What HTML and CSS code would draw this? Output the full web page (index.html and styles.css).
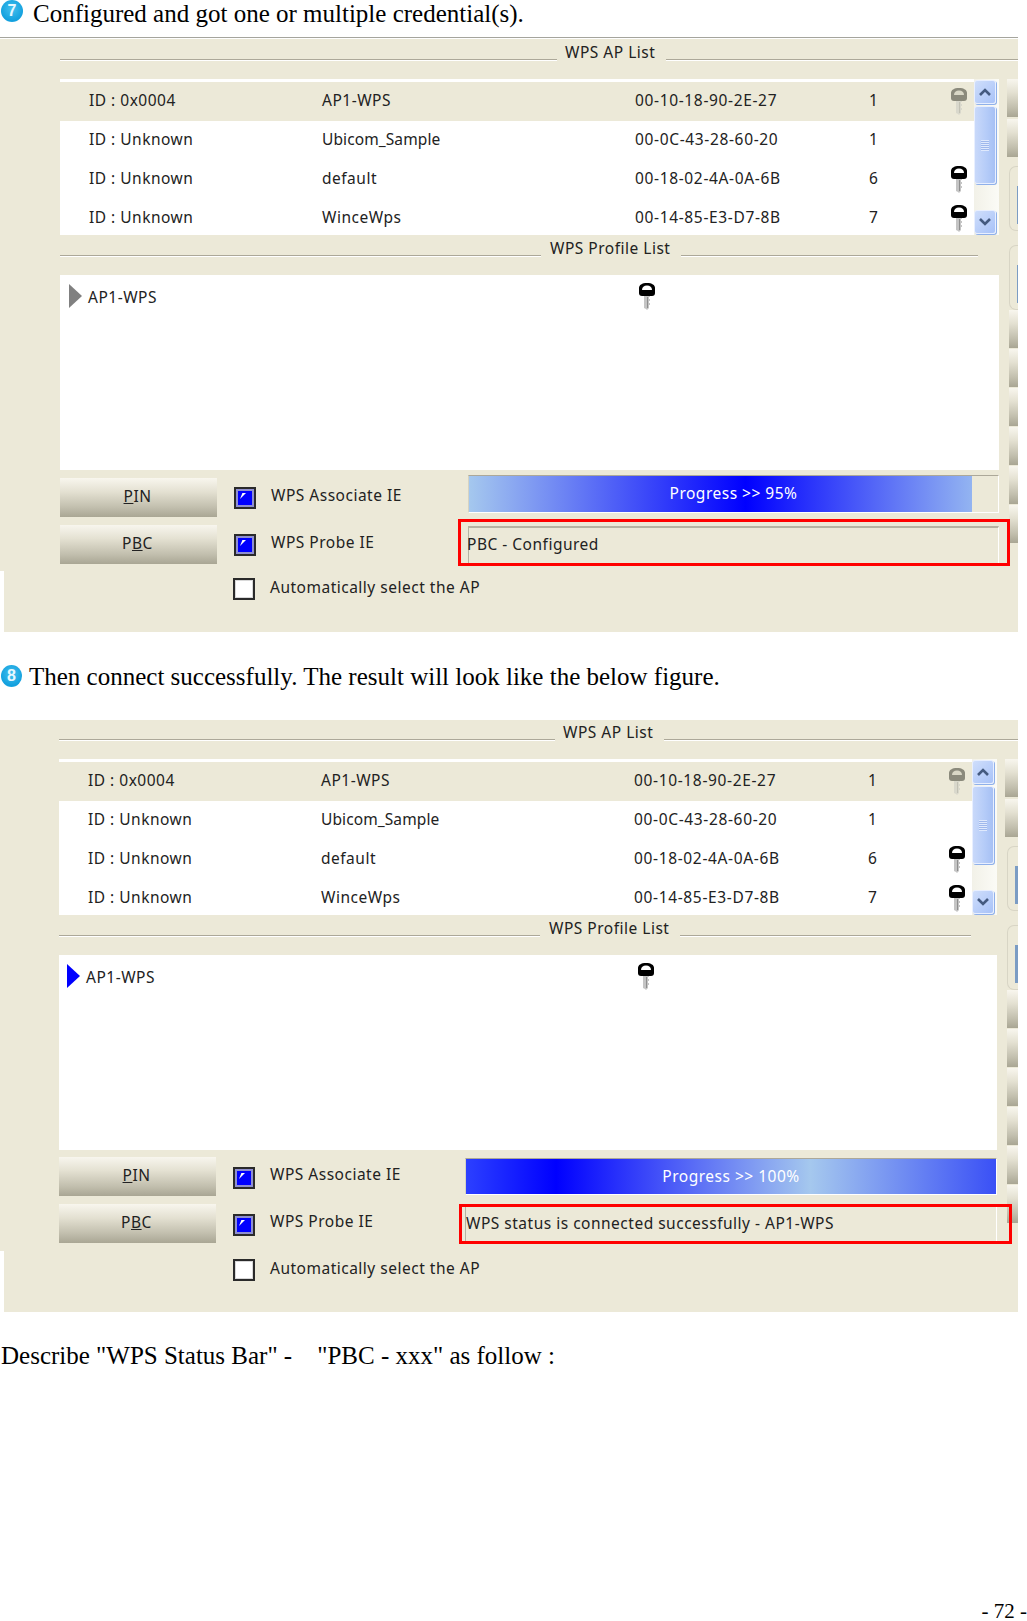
FILE: index.html
```html
<!DOCTYPE html>
<html lang="en">
<head>
<meta charset="utf-8">
<title>WPS status</title>
<link rel="stylesheet" href="styles.css">
</head>
<body>
<svg class="defs" width="0" height="0" aria-hidden="true">
  <symbol id="key" viewBox="0 0 16 29">
    <path class="key-shaft" d="M5 13h6v2h-1v2h1v2h-1v2h1v2h-1v3l-2 2-1-1-2-1z"/>
    <path class="key-line" d="M8 15h1v11H8z"/>
    <path class="key-head" d="M0 11V6C0 3 3 1 8 1s8 2 8 5v5c0 2-1 3-3 3H3c-2 0-3-1-3-3z"/>
    <path class="key-slot" d="M3 8C3 5 5 3.500 8 3.500S13 5 13 8z"/>
  </symbol>
</svg>

<p class="step step-seven"><span class="badge">7</span><span>Configured and got one or multiple credential(s).</span></p>
<div class="rule"></div>

<section class="shot shot-a">
  <div class="title-row">
    <span class="line line-left"></span><span class="title">WPS AP List</span><span class="line line-fill"></span>
  </div>
  <div class="body">
    <div class="work">
      <div class="list">
        <div class="rows">
          <div class="row row-selected"><span>ID : 0x0004</span><span>AP1-WPS</span><span class="mac">00-10-18-90-2E-27</span><span>1</span><svg class="key key-off"><use href="#key"/></svg></div>
          <div class="row"><span>ID : Unknown</span><span class="tight">Ubicom_Sample</span><span class="mac">00-0C-43-28-60-20</span><span>1</span></div>
          <div class="row"><span>ID : Unknown</span><span>default</span><span class="mac">00-18-02-4A-0A-6B</span><span>6</span><svg class="key"><use href="#key"/></svg></div>
          <div class="row"><span>ID : Unknown</span><span>WinceWps</span><span class="mac">00-14-85-E3-D7-8B</span><span>7</span><svg class="key"><use href="#key"/></svg></div>
        </div>
        <div class="scrollbar">
          <div class="sb-btn"><svg viewBox="0 0 12 8" class="chev"><path d="M1 7l5-5 5 5"/></svg></div>
          <div class="sb-thumb"><span class="grip"></span></div>
          <div class="sb-track"></div>
          <div class="sb-btn"><svg viewBox="0 0 12 8" class="chev"><path d="M1 1l5 5 5-5"/></svg></div>
        </div>
      </div>
      <div class="title-row title-row-sub">
        <span class="line line-left"></span><span class="title">WPS Profile List</span><span class="line line-fill"></span>
      </div>
      <div class="profile">
        <span class="arrow arrow-idle"></span><span class="profile-name">AP1-WPS</span>
        <svg class="key key-profile"><use href="#key"/></svg>
      </div>
      <div class="controls">
        <div class="buttons">
          <button class="btn" type="button"><u>P</u>IN</button>
          <button class="btn" type="button">P<u>B</u>C</button>
        </div>
        <div class="checks">
          <div class="check-row"><span class="check check-on"></span><span>WPS Associate IE</span></div>
          <div class="check-row"><span class="check check-on"></span><span>WPS Probe IE</span></div>
          <div class="check-row check-row-auto"><span class="check"></span><span>Automatically select the AP</span></div>
        </div>
        <div class="status-col">
          <div class="progress"><div class="progress-fill"></div><span class="progress-text">Progress &gt;&gt; 95%</span></div>
          <div class="status"><span class="status-text">PBC - Configured</span><span class="highlight"></span></div>
        </div>
      </div>
    </div>
    <div class="strip">
      <i class="strip-btn"></i><i class="strip-btn"></i>
      <div class="strip-box strip-box-first"><i></i></div>
      <div class="strip-box"><i></i></div>
      <i class="strip-btn strip-btn-sm"></i><i class="strip-btn strip-btn-sm"></i><i class="strip-btn strip-btn-sm"></i><i class="strip-btn strip-btn-sm"></i><i class="strip-btn strip-btn-sm"></i><i class="strip-btn strip-btn-sm"></i>
    </div>
  </div>
</section>

<p class="step step-eight"><span class="badge badge-ring">8</span><span>Then connect successfully. The result will look like the below figure.</span></p>

<section class="shot shot-b">
  <div class="title-row">
    <span class="line line-left"></span><span class="title">WPS AP List</span><span class="line line-fill"></span>
  </div>
  <div class="body">
    <div class="work">
      <div class="list">
        <div class="rows">
          <div class="row row-selected"><span>ID : 0x0004</span><span>AP1-WPS</span><span class="mac">00-10-18-90-2E-27</span><span>1</span><svg class="key key-off"><use href="#key"/></svg></div>
          <div class="row"><span>ID : Unknown</span><span class="tight">Ubicom_Sample</span><span class="mac">00-0C-43-28-60-20</span><span>1</span></div>
          <div class="row"><span>ID : Unknown</span><span>default</span><span class="mac">00-18-02-4A-0A-6B</span><span>6</span><svg class="key"><use href="#key"/></svg></div>
          <div class="row"><span>ID : Unknown</span><span>WinceWps</span><span class="mac">00-14-85-E3-D7-8B</span><span>7</span><svg class="key"><use href="#key"/></svg></div>
        </div>
        <div class="scrollbar">
          <div class="sb-btn"><svg viewBox="0 0 12 8" class="chev"><path d="M1 7l5-5 5 5"/></svg></div>
          <div class="sb-thumb"><span class="grip"></span></div>
          <div class="sb-track"></div>
          <div class="sb-btn"><svg viewBox="0 0 12 8" class="chev"><path d="M1 1l5 5 5-5"/></svg></div>
        </div>
      </div>
      <div class="title-row title-row-sub">
        <span class="line line-left"></span><span class="title">WPS Profile List</span><span class="line line-fill"></span>
      </div>
      <div class="profile">
        <span class="arrow"></span><span class="profile-name">AP1-WPS</span>
        <svg class="key key-profile"><use href="#key"/></svg>
      </div>
      <div class="controls">
        <div class="buttons">
          <button class="btn" type="button"><u>P</u>IN</button>
          <button class="btn" type="button">P<u>B</u>C</button>
        </div>
        <div class="checks">
          <div class="check-row"><span class="check check-on"></span><span>WPS Associate IE</span></div>
          <div class="check-row"><span class="check check-on"></span><span>WPS Probe IE</span></div>
          <div class="check-row check-row-auto"><span class="check"></span><span>Automatically select the AP</span></div>
        </div>
        <div class="status-col">
          <div class="progress"><div class="progress-fill"></div><span class="progress-text">Progress &gt;&gt; 100%</span></div>
          <div class="status"><span class="status-text">WPS status is connected successfully - AP1-WPS</span><span class="highlight"></span></div>
        </div>
      </div>
    </div>
    <div class="strip">
      <i class="strip-btn"></i><i class="strip-btn"></i>
      <div class="strip-box strip-box-first"><i></i></div>
      <div class="strip-box"><i></i></div>
      <i class="strip-btn strip-btn-sm"></i><i class="strip-btn strip-btn-sm"></i><i class="strip-btn strip-btn-sm"></i><i class="strip-btn strip-btn-sm"></i><i class="strip-btn strip-btn-sm"></i><i class="strip-btn strip-btn-sm"></i>
    </div>
  </div>
</section>

<p class="step step-plain">Describe "WPS Status Bar" -    "PBC - xxx" as follow :</p>
<p class="page-no">- 72 -</p>
</body>
</html>
```

FILE: styles.css
```css
* { box-sizing: border-box; }
html, body { margin: 0; padding: 0; }
body {
  width: 1027px;
  height: 1621px;
  overflow: hidden;
  background: #fff;
  color: #000;
  font-family: "Liberation Serif", serif;
}
.defs { display: block; height: 0; }

/* document text */
.step {
  margin: 0;
  display: flex;
  align-items: flex-start;
  font-size: 25px;
  line-height: 28px;
  white-space: pre;
}
.step-seven { height: 37px; padding-left: 1px; gap: 10px; }
.step-eight { margin-top: 31px; padding-left: 1px; gap: 7px; }
.step-plain { margin-top: 30px; padding-left: 1px; }
.badge {
  display: flex;
  align-items: center;
  justify-content: center;
  flex: none;
  width: 22px;
  height: 22px;
  border-radius: 50%;
  background: radial-gradient(circle at 50% 40%, #45c0ee, #12a0de 70%, #3db4e6);
  color: #e8f8ff;
  font: bold 16px/1 "Liberation Sans", sans-serif;
}
.step-eight .badge { margin-top: 2px; width: 21px; }
.page-no {
  margin: 233px 0 0;
  font-size: 21px;
  line-height: 16px;
  text-align: right;
  white-space: pre;
}
.rule {
  height: 2px;
  width: 1018px;
  border-top: 1px solid #a5a59d;
  background: #fff;
}

/* screenshot panel */
.shot {
  position: relative;
  width: 1018px;
  background: #ece9d8;
  font-family: "Noto Sans", sans-serif;
  font-size: 15.500px;
  letter-spacing: 0.500px;
  color: #222;
}
.shot::before {
  content: "";
  position: absolute;
  left: 0;
  bottom: 0;
  width: 4px;
  height: 61px;
  background: #fff;
}
.shot-a { height: 593px; padding-left: 60px; }
.shot-b { height: 592px; margin-top: 29px; padding-left: 59px; }

.title-row { display: flex; align-items: flex-start; height: 40px; }
.shot-b > .title-row { height: 39px; }
.line {
  display: block;
  height: 2px;
  margin-top: 20px;
  border-top: 1px solid #aca899;
  border-bottom: 1px solid #fff;
}
.shot-b > .title-row .line { margin-top: 19px; }
.line-left { width: 497px; flex: none; }
.line-fill { flex: 1; }
.title { line-height: 26px; padding: 0 11px 0 8px; white-space: nowrap; }
.shot-b > .title-row .title { line-height: 24px; }
.shot-b > .title-row .line-left { width: 496px; }
.title-row-sub { padding-right: 21px; }
.title-row-sub .line-left { width: 481px; }
.title-row-sub .title { padding: 0 11px 0 9px; }
.shot-b .title-row-sub { padding-right: 26px; }

.body { display: flex; }
.work { flex: none; width: 939px; }
.shot-b .work { width: 938px; }
.strip { flex: 1; margin-left: 8px; }

/* AP list */
.list { display: flex; height: 156px; background: #fff; overflow: hidden; }
.rows { flex: 1; padding-top: 3px; min-width: 0; }
.row {
  position: relative;
  display: grid;
  grid-template-columns: 233px 313px 234px 1fr;
  align-items: center;
  height: 39px;
  padding: 0 0 3px 29px;
  white-space: nowrap;
}
.row-selected { background: #ece9d8; }
.mac { letter-spacing: 0.650px; }
.tight { letter-spacing: 0.100px; }
.key { display: block; width: 16px; height: 29px; }
.row .key { position: absolute; right: 7px; top: 5px; }
.key-head { fill: var(--key-head, #000); }
.key-slot { fill: var(--key-slot, #fff); }
.key-shaft { fill: var(--key-shaft, #c4c4c4); }
.key-line { fill: var(--key-line, #8e8e8e); }
.key-off {
  --key-head: #8b8a7c;
  --key-slot: #d9d7c6;
  --key-shaft: #d9d8cc;
  --key-line: #c2c1b4;
}

.scrollbar {
  flex: none;
  width: 25px;
  padding: 1px 3px 1px 0;
  display: flex;
  flex-direction: column;
  background: linear-gradient(90deg, #f2f1e8, #fbfbf6);
}
.sb-btn {
  flex: none;
  height: 24px;
  display: flex;
  align-items: center;
  justify-content: center;
  border: 1px solid #e8efff;
  border-radius: 3px;
  background: linear-gradient(135deg, #cfdefb, #a8c2f8);
  box-shadow: 1px 1px 0 #8fb0ea;
}
.chev { width: 12px; height: 8px; fill: none; stroke: #445a80; stroke-width: 2.600; }
.sb-thumb {
  flex: none;
  height: 78px;
  margin-top: 2px;
  display: flex;
  align-items: center;
  justify-content: center;
  border: 1px solid #e8efff;
  border-radius: 3px;
  background: linear-gradient(90deg, #c9d9fa, #b4cbf8 60%, #a6c0f4);
  box-shadow: 1px 1px 0 #8fb0ea;
}
.grip {
  width: 8px;
  height: 11px;
  background: repeating-linear-gradient(180deg, #dfe9fd 0 1px, #9fb8ec 1px 2px);
}
.sb-track { flex: 1; }

/* profile list */
.profile {
  position: relative;
  height: 195px;
  background: #fff;
  display: flex;
  align-items: flex-start;
  padding: 9px 0 0 9px;
}
.shot-b .profile { padding-left: 8px; }
.arrow {
  flex: none;
  width: 0;
  height: 0;
  border-style: solid;
  border-width: 12.500px 0 12.500px 13px;
  border-color: transparent transparent transparent #0000ff;
}
.arrow-idle { border-left-color: #808080; }
.profile-name { margin: 2px 0 0 6px; }
.key-profile { position: absolute; left: 579px; top: 7px; }

/* controls */
.controls { display: flex; }
.buttons { flex: none; width: 157px; padding-top: 8px; display: flex; flex-direction: column; gap: 8px; }
.shot-b .buttons { padding-top: 7px; }
.btn {
  display: block;
  height: 39px;
  padding: 0 2px 3px 0;
  border: 0;
  font: inherit;
  letter-spacing: inherit;
  color: inherit;
  background: linear-gradient(180deg, #f8f6ee 0%, #e4e1d2 35%, #c2bfae 75%, #a9a694 100%);
}
.checks { flex: none; width: 234px; margin-left: 17px; padding-top: 17px; }
.shot-b .checks { width: 232px; margin-left: 17px; }
.check-row {
  display: flex;
  align-items: flex-start;
  gap: 15px;
  height: 22px;
  line-height: 16px;
  margin-bottom: 25px;
  white-space: nowrap;
}
.shot-b .check-row { line-height: 14px; }
.check-row-auto { margin: -3px 0 0 -1px; gap: 15px; line-height: 18px; }
.shot-b .check-row-auto { margin: -2px 0 0; line-height: 18px; }
.check {
  flex: none;
  display: block;
  position: relative;
  width: 22px;
  height: 22px;
  border: 2px solid #2a2a2a;
  background: #fff;
  box-shadow: inset 0 0 0 1px #d8d8d8;
}
.check-on {
  background: #0000ff;
  box-shadow: inset 0 0 0 2px #8f8fd0;
}
.check-on::before {
  content: "";
  position: absolute;
  left: 4px;
  top: 4px;
  width: 6px;
  height: 6px;
  background: #fff;
  clip-path: polygon(0 100%, 40% 0, 100% 0);
}
.status-col { flex: 1; padding-top: 5px; min-width: 0; }

/* progress + status */
.progress {
  position: relative;
  height: 38px;
  border-top: 1px solid #aca899;
  border-left: 1px solid #d6d3c2;
  border-bottom: 1px solid #fff;
  border-right: 1px solid #fff;
  display: flex;
  align-items: center;
  justify-content: center;
  color: #fff;
}
.shot-b .progress { height: 37px; margin-top: 3px; }
.progress-fill {
  position: absolute;
  left: 0;
  top: 0;
  bottom: 0;
  width: 95%;
  background: linear-gradient(90deg, #a5c8ee 0%, #0000ff 55%, #93b4f1 100%);
}
.shot-b .progress-fill {
  width: 100%;
  background: linear-gradient(90deg, #2c40ff 0%, #0000ff 17%, #a5c8ee 65%, #3a50f6 100%);
}
.progress-text { position: relative; top: -1px; }
.status {
  position: relative;
  height: 38px;
  margin-top: 13px;
  padding-bottom: 4px;
  border-top: 2px solid #b5b2a2;
  border-left: 1px solid #b5b2a2;
  border-right: 1px solid #fff;
  display: flex;
  align-items: center;
  color: #222;
  white-space: nowrap;
}
.status-text { margin-left: -2px; }
.shot-b .status { height: 35px; margin-top: 12px; border-top: 0; }
.shot-b .status-text { margin-left: 0; }
.highlight {
  position: absolute;
  top: -9px;
  bottom: -2px;
  left: -11px;
  right: -12px;
  border: 3px solid #ff0000;
}
.shot-b .highlight { top: -3px; left: -7px; right: -16px; }

/* right edge */
.strip-btn {
  display: block;
  height: 38px;
  margin-bottom: 2px;
  background: linear-gradient(180deg, #f8f6ee 0%, #e4e1d2 35%, #c2bfae 75%, #a9a694 100%);
}
.strip-btn-sm { margin: 0 0 1px 2px; }
.strip-box {
  height: 65px;
  margin: 0 0 14px 2px;
  padding: 19px 0 0 7px;
  border: 1px solid #d8d5c5;
  border-right: 0;
  border-radius: 7px 0 0 7px;
}
.strip-box-first { margin-top: 9px; }
.strip-box:last-of-type { margin-bottom: 0; }
.strip-box i { display: block; height: 38px; background: #7b9cc4; }
```
